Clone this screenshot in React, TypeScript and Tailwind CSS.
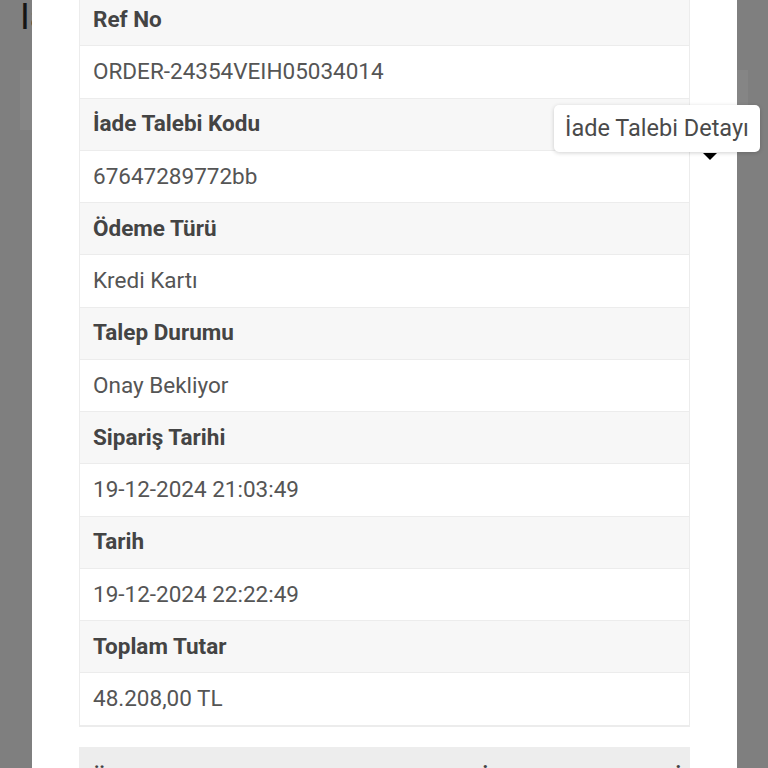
const rows: [string, string][] = [
  ["Ref No", "ORDER-24354VEIH05034014"],
  ["İade Talebi Kodu", "67647289772bb"],
  ["Ödeme Türü", "Kredi Kartı"],
  ["Talep Durumu", "Onay Bekliyor"],
  ["Sipariş Tarihi", "19-12-2024 21:03:49"],
  ["Tarih", "19-12-2024 22:22:49"],
  ["Toplam Tutar", "48.208,00 TL"],
];

export default function App() {
  return (
    <div
      className="relative w-[768px] h-[768px] overflow-hidden bg-[#7f7f7f]"
      style={{ fontFamily: "Roboto, 'Noto Sans', sans-serif" }}
    >
      {/* page behind the overlay */}
      <div className="pl-[20px] w-[32px] overflow-hidden">
        <div className="-mt-[7px] text-[36px] leading-[48px] text-[#151515] whitespace-nowrap">İade</div>
      </div>
      <div className="ml-[20px] mt-[29px] w-[728px] h-[60px] bg-[#858585]" />

      {/* modal */}
      <div className="absolute left-[32px] top-0 w-[705px] h-[768px] bg-white px-[47px]">
        <div className="-mt-[6px] border border-[#ececec] border-t-0">
          {rows.map(([label, value]) => (
            <div key={label}>
              <div className="h-[52.25px] flex items-center px-[13px] bg-[#f7f7f7] border-b border-[#ececec] text-[22.5px] font-bold text-[#444]">
                {label}
              </div>
              <div className="h-[52.25px] flex items-center px-[13px] bg-white border-b border-[#ececec] text-[22.5px] text-[#555]">
                {value}
              </div>
            </div>
          ))}
        </div>

        <div className="mt-[20px] h-[60px] bg-[#ededed] flex items-start pl-[13px] pt-[14px] text-[22.5px] font-bold text-[#444] overflow-hidden">
          <span className="w-[390px] shrink-0">Ürün</span>
          <span className="w-[193px] shrink-0">İade</span>
          <span className="shrink-0">İşlem</span>
        </div>
      </div>

      {/* tooltip */}
      <div className="absolute left-[554px] top-[105px] w-[206px] h-[47px] rounded-[5px] bg-white shadow-[0_1px_4px_rgba(0,0,0,0.18)] flex items-center justify-center text-[23.5px] text-[#4a4a4a] whitespace-nowrap">
        İade Talebi Detayı
      </div>
      <div className="absolute left-[703px] top-[153px] w-0 h-0 border-l-[7px] border-r-[7px] border-t-[7px] border-l-transparent border-r-transparent border-t-black" />
    </div>
  );
}
